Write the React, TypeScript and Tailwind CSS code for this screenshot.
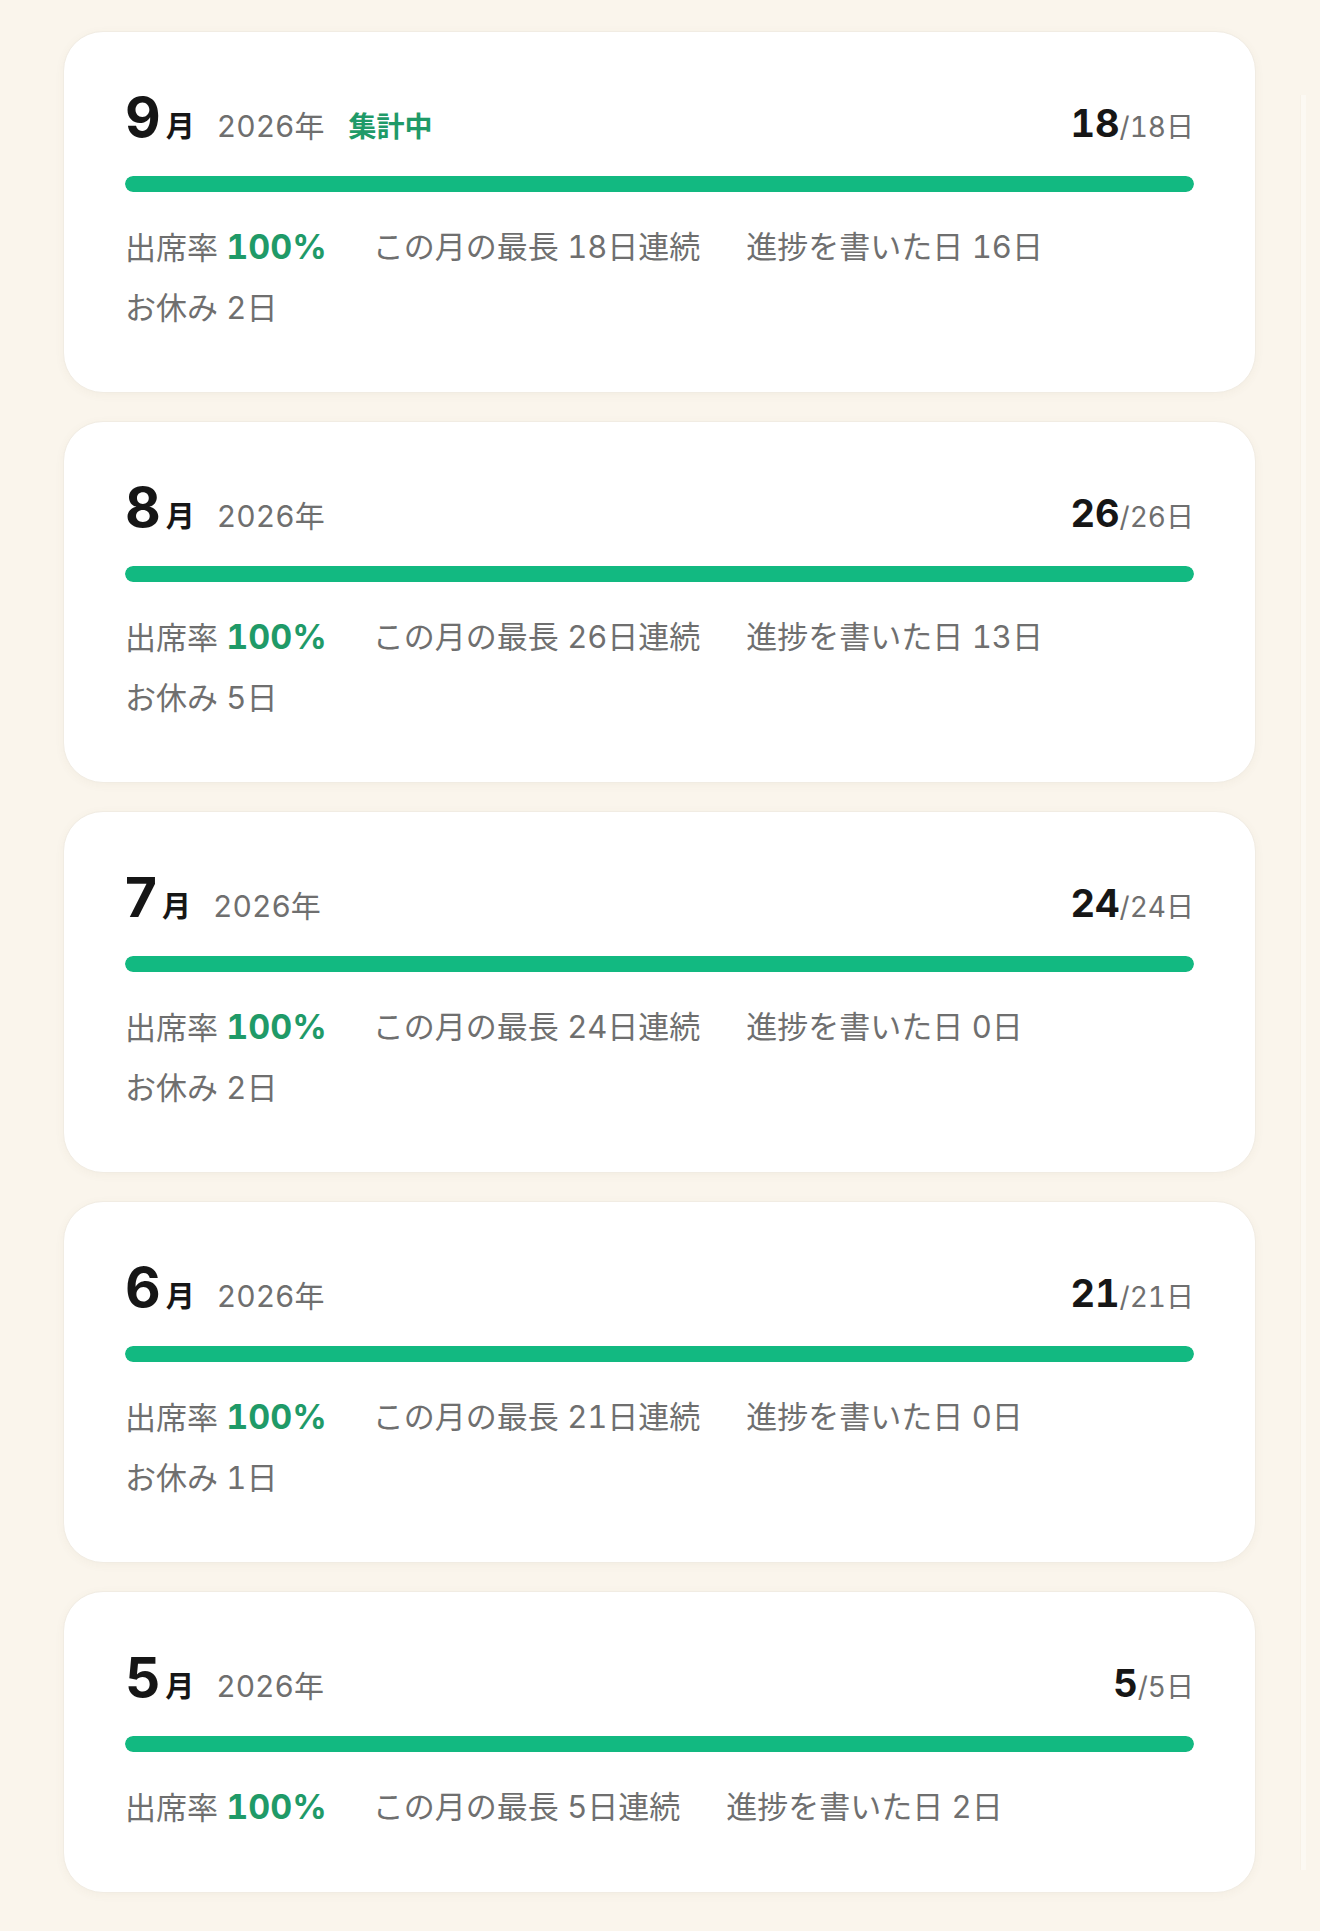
import React from "react";

type Month = {
  month: number;
  year: number;
  active?: boolean;
  attended: number;
  total: number;
  streak: number;
  wrote: number;
  rest: number;
};

const months: Month[] = [
  { month: 9, year: 2026, active: true, attended: 18, total: 18, streak: 18, wrote: 16, rest: 2 },
  { month: 8, year: 2026, attended: 26, total: 26, streak: 26, wrote: 13, rest: 5 },
  { month: 7, year: 2026, attended: 24, total: 24, streak: 24, wrote: 0, rest: 2 },
  { month: 6, year: 2026, attended: 21, total: 21, streak: 21, wrote: 0, rest: 1 },
  { month: 5, year: 2026, attended: 5, total: 5, streak: 5, wrote: 2, rest: 0 },
];

function MonthCard({ m }: { m: Month }) {
  const rate = Math.round((m.attended / m.total) * 100);
  return (
    <div className="rounded-[40px] bg-white border border-[#f1ece3] shadow-[0_2px_10px_rgba(120,100,60,0.05)] px-[61px] pt-[58px] pb-[62px]">
      <div className="flex items-baseline justify-between leading-none">
        <div className="flex items-baseline">
          <span className="text-[55px] font-bold text-[#161616] leading-none">{m.month}</span>
          <span className="text-[29px] font-bold text-[#161616] leading-none ml-[5px]">月</span>
          <span className="text-[30px] text-[#6f6f6f] leading-none ml-[22px] tabular-nums">{m.year}年</span>
          {m.active && (
            <span className="text-[28px] font-bold text-[#1f9a68] leading-none ml-[24px]">集計中</span>
          )}
        </div>
        <div className="flex items-baseline">
          <span className="text-[38px] font-bold text-[#161616] leading-none tabular-nums">{m.attended}</span>
          <span className="text-[28px] text-[#6f6f6f] leading-none tabular-nums">/{m.total}日</span>
        </div>
      </div>
      <div className="mt-[31px] h-[16px] rounded-full bg-[#eef2ef] overflow-hidden">
        <div className="h-full rounded-full bg-[#12b981]" style={{ width: `${rate}%` }} />
      </div>
      <div className="mt-[33px] flex flex-wrap gap-x-[46px] gap-y-[16px] text-[31px] leading-[44px] text-[#6f6f6f] tabular-nums">
        <span>
          出席率 <span className="text-[34px] font-bold text-[#1f9a68]">{rate}%</span>
        </span>
        <span>この月の最長 {m.streak}日連続</span>
        <span>進捗を書いた日 {m.wrote}日</span>
        {m.rest > 0 && <span>お休み {m.rest}日</span>}
      </div>
    </div>
  );
}

export default function App() {
  return (
    <div
      className="min-h-[1931px] bg-[#faf5ec] flex"
      style={{ fontFamily: 'Inter, "Noto Sans CJK JP", sans-serif' }}
    >
      <div className="ml-[63px] mt-[31px] w-[1193px] flex flex-col gap-[28px]">
        {months.map((m) => (
          <MonthCard key={m.month} m={m} />
        ))}
      </div>
      <div className="ml-[44px] mt-[95px] mb-[60px] w-[6px] h-[1775px] bg-[#fcf9f3] border-l border-[#f7f1e7]" />
    </div>
  );
}
